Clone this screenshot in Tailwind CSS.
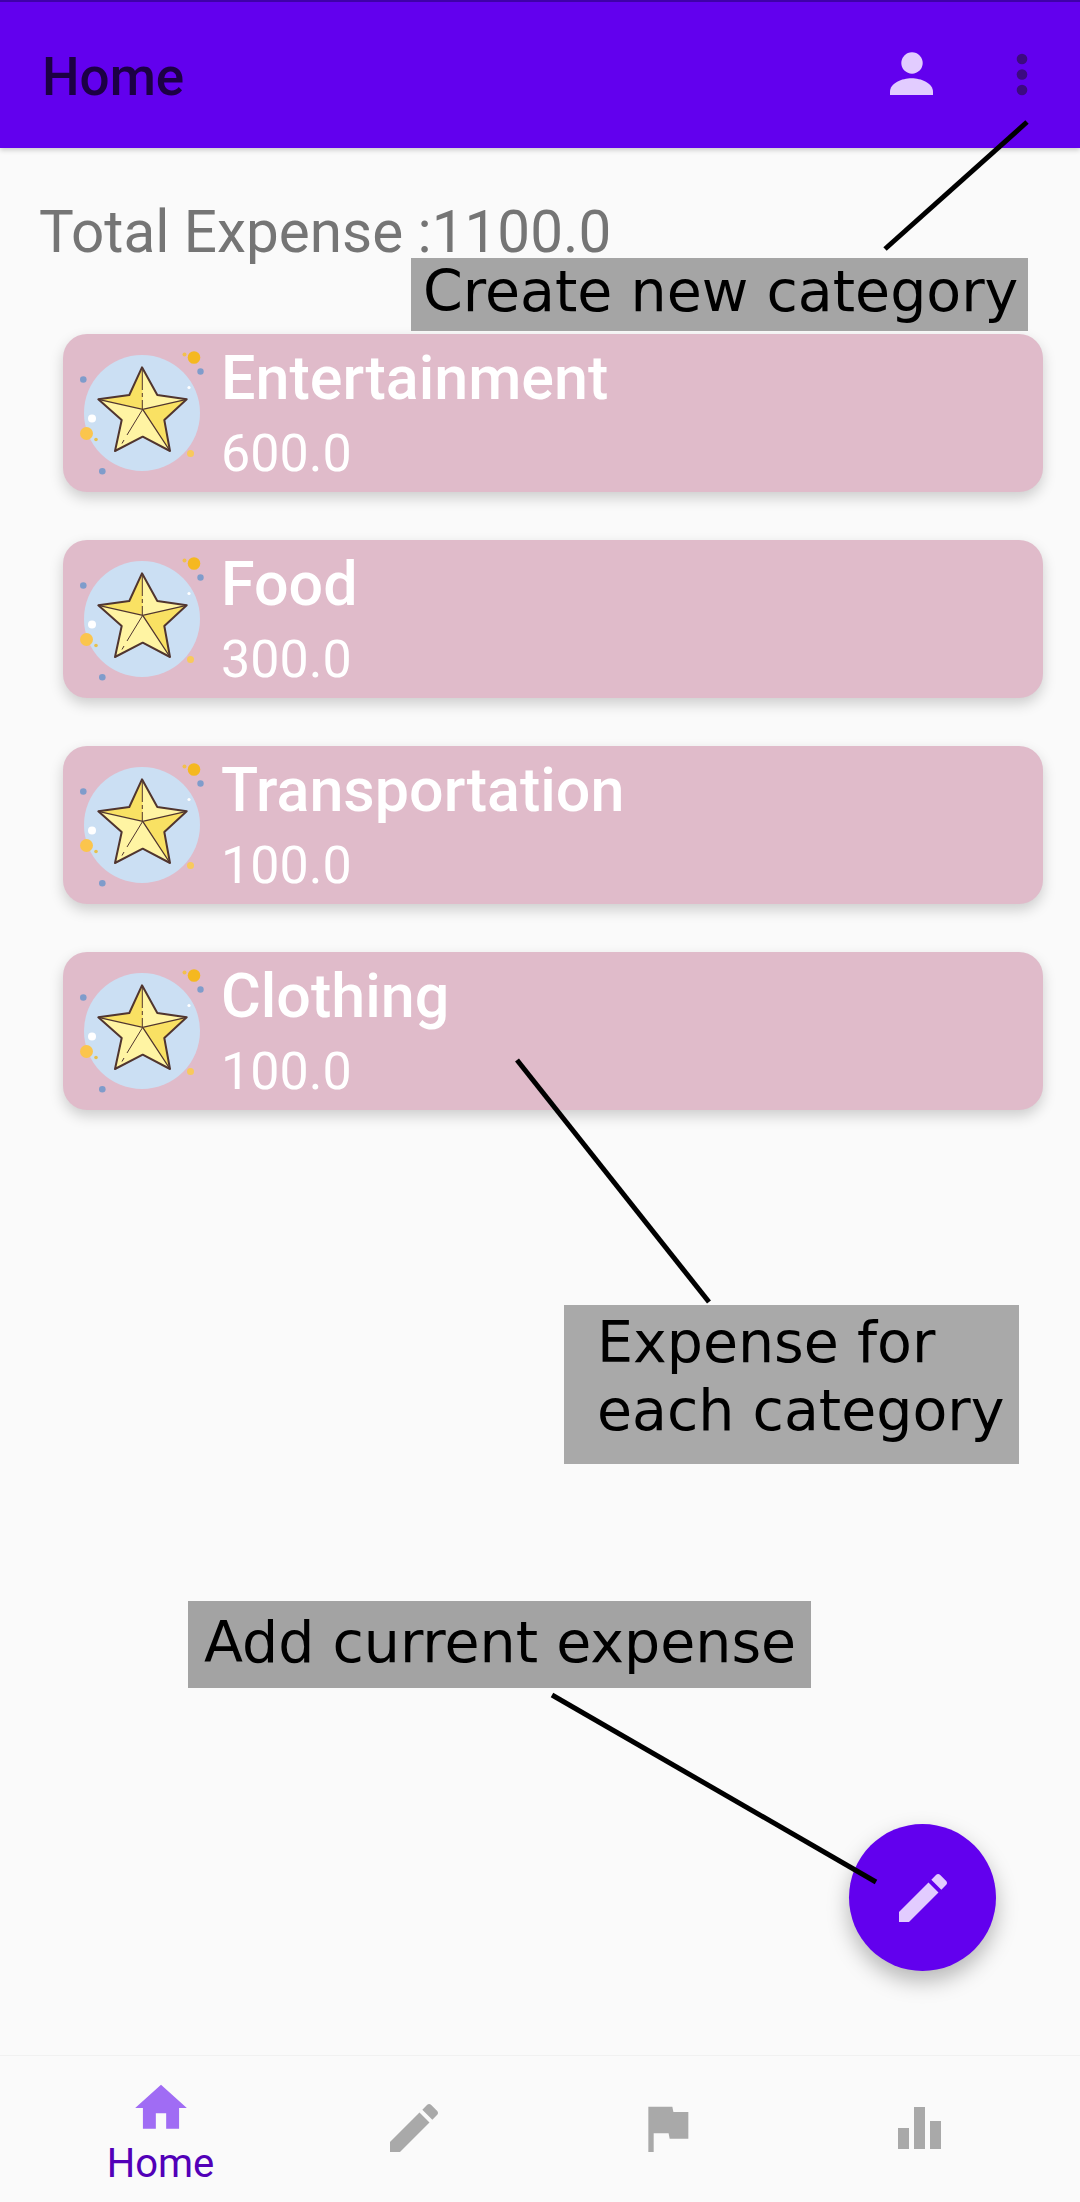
<!DOCTYPE html>
<html lang="en">
<head>
  <meta charset="UTF-8">
  <meta name="viewport" content="width=device-width, initial-scale=1.0">
  <title>Home</title>
  <script src="https://cdn.jsdelivr.net/npm/@tailwindcss/browser@4"></script>
</head>
<body class="bg-[#fafafa] font-['Roboto',sans-serif]">
  <!-- shared category icon -->
  <svg class="hidden">
    <symbol id="star" viewBox="0 0 150 150">
      <circle cx="72" cy="73" r="58" fill="#cbdff3"/>
      <circle cx="124" cy="17.5" r="6.3" fill="#f5b820"/>
      <circle cx="114.5" cy="14.5" r="2" fill="#f2c04e"/>
      <circle cx="130.500" cy="31.500" r="3.200" fill="#7f9ccb"/>
      <circle cx="13.300" cy="39.500" r="3.300" fill="#7f9ccb"/>
      <circle cx="119" cy="47.500" r="1.600" fill="#ffffff"/>
      <circle cx="22" cy="78.500" r="4" fill="#ffffff"/>
      <circle cx="16.500" cy="93.500" r="6.500" fill="#fbc54d"/>
      <circle cx="26" cy="99.500" r="1.800" fill="#e6c04e"/>
      <circle cx="120.500" cy="113.500" r="3.500" fill="#f8c95c"/>
      <circle cx="32.300" cy="131.300" r="3.300" fill="#7f9ccb"/>
      <path d="M72 27.300L87.300 55 116.700 59.300 94.300 80 100 111 72.700 96.700 45 111 51.700 80 28.300 59.300 59.300 55z" fill="#fff4a3"/>
      <path d="M72 27.300L59.300 55 28.300 59.300 72.700 69.300zM116.700 59.300L72.700 69.300 100 111 94.300 80z" fill="#f9e163"/>
      <path d="M72 27.300L87.300 55 116.700 59.300 94.300 80 100 111 72.700 96.700 45 111 51.700 80 28.300 59.300 59.300 55z" fill="none" stroke="#50352f" stroke-width="2" stroke-linejoin="round"/>
      <path d="M28.300 59.300L72.700 69.300 116.700 59.300M72.700 69.300L100 111" fill="none" stroke="#50352f" stroke-width="1.300"/>
      <path d="M72.700 69.300L57 95M54 100L52 103.500M72.300 30V50M72.300 53V57M72.300 60V69" fill="none" stroke="#50352f" stroke-width="1"/>
    </symbol>
  </svg>

  <div class="relative w-[1080px] h-[2202px] flex flex-col overflow-hidden">
    <header class="h-[148px] shrink-0 flex items-center bg-[#6200ee] border-t-2 border-[#3f00a8] pl-[42px] pr-[50px] shadow-[0_2px_5px_rgba(0,0,0,0.2)]">
      <div class="pt-[4px] text-[53px] leading-[64px] font-medium text-[#1c0044]">Home</div>
      <div class="ml-auto flex items-center gap-[70px]">
        <svg class="w-[64px] h-[64px]" viewBox="0 0 64 64" fill="#e2ccff">
          <circle cx="32" cy="20" r="10.700"/>
          <path d="M10 52v-3C10 40 22 35.300 31.500 35.300S53 40 53 49v3z"/>
        </svg>
        <svg class="w-[16px] h-[64px]" viewBox="0 0 16 64" fill="#3c0a80">
          <circle cx="8" cy="16" r="5.300"/>
          <circle cx="8" cy="31.500" r="5.300"/>
          <circle cx="8" cy="47" r="5.300"/>
        </svg>
      </div>
    </header>

    <main class="flex-1 pt-[51px]">
      <div class="pl-[39px] text-[58.4px] leading-[66px] text-[#757575]">Total Expense :1100.0</div>
      <div class="mt-[69px] ml-[63px] w-[980px] flex flex-col gap-[48px]">
        <div class="h-[158px] flex rounded-[24px] bg-[#e0bbca] shadow-[0_6px_14px_rgba(0,0,0,0.18)]">
          <svg class="w-[150px] h-[150px] ml-[7px] mt-[6px] shrink-0"><use href="#star"/></svg>
          <div class="ml-[1px] pt-[12px] text-white">
            <div class="text-[61px] leading-[64px] font-medium">Entertainment</div>
            <div class="mt-[14px] text-[52px] leading-[60px]">600.0</div>
          </div>
        </div>
        <div class="h-[158px] flex rounded-[24px] bg-[#e0bbca] shadow-[0_6px_14px_rgba(0,0,0,0.18)]">
          <svg class="w-[150px] h-[150px] ml-[7px] mt-[6px] shrink-0"><use href="#star"/></svg>
          <div class="ml-[1px] pt-[12px] text-white">
            <div class="text-[61px] leading-[64px] font-medium">Food</div>
            <div class="mt-[14px] text-[52px] leading-[60px]">300.0</div>
          </div>
        </div>
        <div class="h-[158px] flex rounded-[24px] bg-[#e0bbca] shadow-[0_6px_14px_rgba(0,0,0,0.18)]">
          <svg class="w-[150px] h-[150px] ml-[7px] mt-[6px] shrink-0"><use href="#star"/></svg>
          <div class="ml-[1px] pt-[12px] text-white">
            <div class="text-[61px] leading-[64px] font-medium">Transportation</div>
            <div class="mt-[14px] text-[52px] leading-[60px]">100.0</div>
          </div>
        </div>
        <div class="h-[158px] flex rounded-[24px] bg-[#e0bbca] shadow-[0_6px_14px_rgba(0,0,0,0.18)]">
          <svg class="w-[150px] h-[150px] ml-[7px] mt-[6px] shrink-0"><use href="#star"/></svg>
          <div class="ml-[1px] pt-[12px] text-white">
            <div class="text-[61px] leading-[64px] font-medium">Clothing</div>
            <div class="mt-[14px] text-[52px] leading-[60px]">100.0</div>
          </div>
        </div>
      </div>
    </main>

    <nav class="h-[147px] shrink-0 grid grid-cols-4 px-[34px] bg-[#fafafa] border-t border-[#f1f1f1]">
      <div class="flex flex-col items-center pt-[21px]">
        <svg class="w-[62px] h-[62px]" viewBox="0 0 24 24" fill="#a06cf4"><path d="M10 20v-6h4v6h5v-8h3L12 3 2 12h3v8z"/></svg>
        <div class="mt-[2px] text-[40px] leading-[46px] text-[#5200b8]">Home</div>
      </div>
      <div class="flex justify-center pt-[40px]">
        <svg class="w-[64px] h-[64px]" viewBox="0 0 24 24" fill="#a9a9a9"><path d="M3 17.250V21h3.750L17.810 9.940l-3.750-3.750L3 17.250zM20.710 7.040c.39-.39.39-1.020 0-1.410l-2.340-2.340c-.39-.39-1.020-.39-1.410 0l-1.830 1.830 3.750 3.750 1.830-1.830z"/></svg>
      </div>
      <div class="flex justify-center pt-[40px]">
        <svg class="w-[64px] h-[64px]" viewBox="0 0 24 24" fill="#a9a9a9"><path d="M14.400 6L14 4H5v17h2v-7h5.600l.4 2h7V6z"/></svg>
      </div>
      <div class="flex justify-center pt-[40px]">
        <svg class="w-[64px] h-[64px]" viewBox="0 0 64 64" fill="#a9a9a9">
          <rect x="10" y="32" width="11" height="21"/>
          <rect x="26" y="11" width="11" height="42"/>
          <rect x="42" y="25" width="11" height="28"/>
        </svg>
      </div>
    </nav>

    <!-- floating action button -->
    <button class="absolute left-[849px] top-[1824px] w-[147px] h-[147px] rounded-full bg-[#6200ee] flex items-center justify-center shadow-[0_10px_22px_rgba(0,0,0,0.28)]">
      <svg class="w-[64px] h-[64px]" viewBox="0 0 24 24" fill="#e2ccff"><path d="M3 17.250V21h3.750L17.810 9.940l-3.750-3.750L3 17.250zM20.710 7.040c.39-.39.39-1.020 0-1.410l-2.340-2.340c-.39-.39-1.020-.39-1.410 0l-1.830 1.830 3.750 3.750 1.830-1.830z"/></svg>
    </button>

    <!-- annotations drawn over the screenshot -->
    <div class="absolute left-[411px] top-[258px] w-[617px] h-[73px] bg-[#a5a5a5] pl-[12px] font-['DejaVu_Sans',sans-serif] text-[57px] leading-[66px] text-black whitespace-nowrap">Create new category</div>
    <div class="absolute left-[564px] top-[1305px] w-[455px] h-[159px] bg-[#a9a9a9] pl-[33px] pt-[3px] font-['DejaVu_Sans',sans-serif] text-[57px] leading-[68px] text-black whitespace-nowrap">Expense for<br>each category</div>
    <div class="absolute left-[188px] top-[1601px] w-[623px] h-[87px] bg-[#a3a3a3] pl-[16px] pt-[8px] font-['DejaVu_Sans',sans-serif] text-[57px] leading-[66px] text-black whitespace-nowrap">Add current expense</div>
    <svg class="absolute inset-0 w-[1080px] h-[2202px] pointer-events-none" stroke="#000" stroke-width="5">
      <line x1="1027" y1="122" x2="885" y2="249"/>
      <line x1="517" y1="1060" x2="709" y2="1302"/>
      <line x1="552" y1="1695" x2="876" y2="1882"/>
    </svg>
  </div>
</body>
</html>
